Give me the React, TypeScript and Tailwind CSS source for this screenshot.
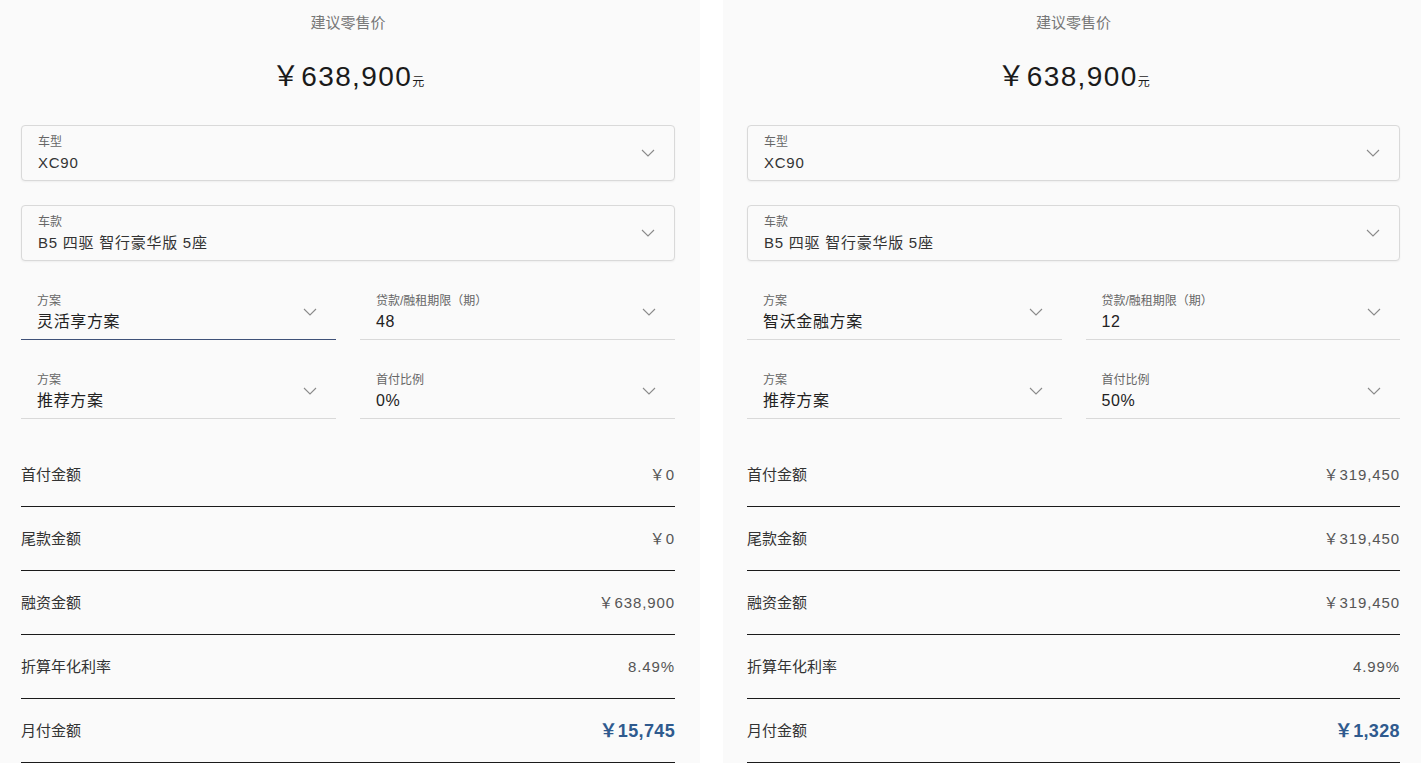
import React from 'react';

const Chevron: React.FC = () => (
  <svg width="14" height="8" viewBox="0 0 14 8" fill="none" className="shrink-0">
    <path d="M1 1l6 6 6-6" stroke="#8a8a8a" strokeWidth="1.1" />
  </svg>
);

const BoxSelect: React.FC<{ label: string; value: string }> = ({ label, value }) => (
  <div className="flex h-[56px] items-center justify-between rounded-[4px] border border-[#d9d9d9] bg-[#fafafa] pl-[16px] pr-[19px] shadow-[0_1px_2px_rgba(0,0,0,0.05)]">
    <div className="pt-[1px]">
      <div className="text-[12px] leading-[16px] text-[#666]">{label}</div>
      <div className="mt-[2px] text-[15px] leading-[22px] tracking-[0.05em] text-[#333]">{value}</div>
    </div>
    <Chevron />
  </div>
);

const LineSelect: React.FC<{ label: string; value: string; active?: boolean }> = ({ label, value, active }) => (
  <div
    className={`flex h-[55px] items-center justify-between border-b pl-[16px] pr-[19px] ${
      active ? 'border-[#3f5178]' : 'border-[#d9d9d9]'
    }`}
  >
    <div className="pt-[1px]">
      <div className="text-[12px] leading-[16px] text-[#666]">{label}</div>
      <div className="mt-[2px] text-[16px] leading-[22px] tracking-[0.04em] text-[#222]">{value}</div>
    </div>
    <Chevron />
  </div>
);

type Row = { label: string; value: string; strong?: boolean };

type PanelData = {
  plan: string;
  term: string;
  ratio: string;
  rows: Row[];
  focused?: boolean;
};

const Panel: React.FC<{ data: PanelData; className: string }> = ({ data, className }) => (
  <div className={`h-[763px] bg-[#fafafa] ${className}`}>
    <div className="pt-[13px] text-center text-[15px] leading-[20px] text-[#777]">建议零售价</div>
    <div className="mt-[26px] flex items-baseline justify-center leading-[36px] text-[#1a1a1a]">
      <span className="text-[28px] tracking-[0.05em]">￥638,900</span>
      <span className="text-[12px]">元</span>
    </div>

    <div className="mt-[25px] flex flex-col gap-[24px]">
      <BoxSelect label="车型" value="XC90" />
      <BoxSelect label="车款" value="B5 四驱 智行豪华版 5座" />
      <div className="grid grid-cols-2 gap-x-[24px] gap-y-[24px]">
        <LineSelect label="方案" value={data.plan} active={data.focused} />
        <LineSelect label="贷款/融租期限（期）" value={data.term} />
        <LineSelect label="方案" value="推荐方案" />
        <LineSelect label="首付比例" value={data.ratio} />
      </div>
    </div>

    <div className="mt-[24px]">
      {data.rows.map((r, i) => (
        <div key={i} className="flex h-[64px] items-center justify-between border-b border-[#1a1a1a] pt-[1px]">
          <span className="text-[15px] text-[#333]">{r.label}</span>
          {r.strong ? (
            <span className="text-[18px] font-bold tracking-[0.02em] text-[#2f5a8e]">{r.value}</span>
          ) : (
            <span className="text-[15px] tracking-[0.06em] text-[#555]">{r.value}</span>
          )}
        </div>
      ))}
    </div>
  </div>
);

const left: PanelData = {
  plan: '灵活享方案',
  term: '48',
  ratio: '0%',
  focused: true,
  rows: [
    { label: '首付金额', value: '￥0' },
    { label: '尾款金额', value: '￥0' },
    { label: '融资金额', value: '￥638,900' },
    { label: '折算年化利率', value: '8.49%' },
    { label: '月付金额', value: '￥15,745', strong: true },
  ],
};

const right: PanelData = {
  plan: '智沃金融方案',
  term: '12',
  ratio: '50%',
  rows: [
    { label: '首付金额', value: '￥319,450' },
    { label: '尾款金额', value: '￥319,450' },
    { label: '融资金额', value: '￥319,450' },
    { label: '折算年化利率', value: '4.99%' },
    { label: '月付金额', value: '￥1,328', strong: true },
  ],
};

const App: React.FC = () => {
  return (
    <div className="flex min-h-screen gap-[23px] bg-white font-['Liberation_Sans','Noto_Sans_CJK_SC',sans-serif]">
      <Panel data={left} className="w-[700px] shrink-0 pl-[21px] pr-[25px]" />
      <Panel data={right} className="flex-1 pl-[24px] pr-[21px]" />
    </div>
  );
};

export default App;
